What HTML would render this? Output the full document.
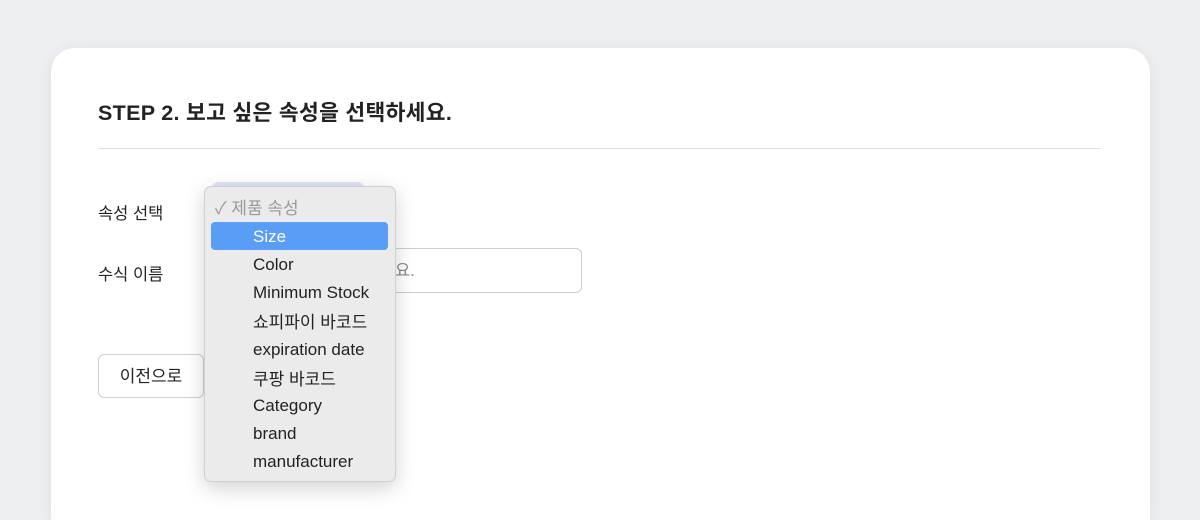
<!DOCTYPE html>
<html style="overflow:hidden;height:520px"><head><meta charset="utf-8"><style>
body{margin:0;width:1200px;height:520px;background:#eeeff1;overflow:hidden;font-family:"Liberation Sans","Noto Sans CJK KR",sans-serif;position:relative}
.card{position:absolute;left:51px;top:48px;width:1099px;height:472px;background:#fff;border-radius:24px 24px 0 0;box-shadow:0 2px 14px rgba(0,0,0,.08)}
.title{position:absolute;left:98px;top:96px;font-size:21.5px;font-weight:bold;color:#222;letter-spacing:0.3px}
.hr{position:absolute;left:98px;top:148px;width:1002px;height:1px;background:#dedede}
.lbl{position:absolute;left:98px;font-size:16.5px;color:#222}
.sel{position:absolute;left:212px;top:182px;width:152px;height:30px;background:#dfe4f4;border-radius:6px}
.inp{position:absolute;left:340px;top:248px;width:240px;height:43px;border:1px solid #cfcfcf;border-radius:6px;background:#fff;font-size:16.5px;color:#888;line-height:45px}
.btn{position:absolute;left:98px;top:354px;width:104px;height:42px;border:1px solid #cfcfcf;border-radius:6px;background:#fff;font-size:17px;text-align:center;line-height:44px;color:#222}
.dd{position:absolute;left:204px;top:186px;width:190px;height:294px;background:#ebebeb;border:1px solid #d0d0d0;border-radius:7px;box-shadow:0 6px 20px rgba(0,0,0,.18)}
.it{position:absolute;left:48px;font-size:17px;color:#222;line-height:20px}
.hl{position:absolute;left:6px;top:35px;width:177px;height:28px;background:#5a9df6;border-radius:4px}
</style></head><body>
<div class="card"></div>
<div class="title">STEP 2. 보고 싶은 속성을 선택하세요.</div>
<div class="hr"></div>
<div class="lbl" style="top:200px">속성 선택</div>
<div class="lbl" style="top:261px">수식 이름</div>
<div class="sel"></div>
<div class="inp"><span style="margin-left:54px">요.</span></div>
<div class="btn">이전으로</div>
<div class="dd">
<div class="hl"></div>
<div class="it" style="left:10px;top:12px;color:#999">✓ 제품 속성</div>
<div class="it" style="top:40px;color:#fff">Size</div>
<div class="it" style="top:68px">Color</div>
<div class="it" style="top:96px">Minimum Stock</div>
<div class="it" style="top:126px">쇼피파이 바코드</div>
<div class="it" style="top:153px">expiration date</div>
<div class="it" style="top:183px">쿠팡 바코드</div>
<div class="it" style="top:209px">Category</div>
<div class="it" style="top:237px">brand</div>
<div class="it" style="top:265px">manufacturer</div>
</div>
</body></html>
